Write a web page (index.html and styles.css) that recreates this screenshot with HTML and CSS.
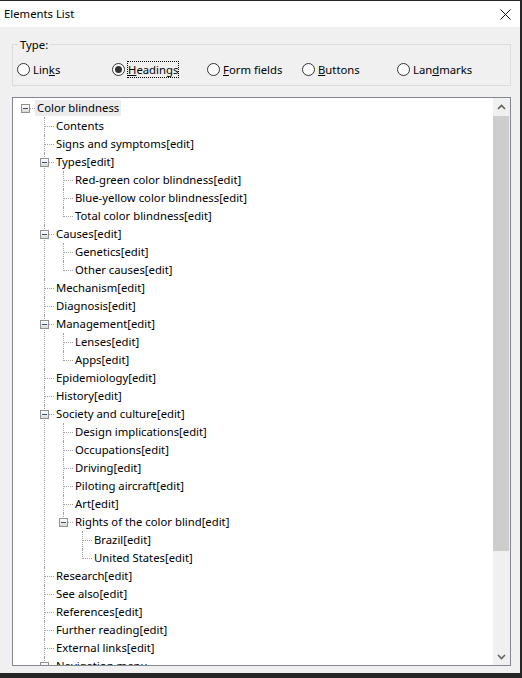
FILE: index.html
```html
<!DOCTYPE html>
<html>
<head>
<meta charset="utf-8">
<title>Elements List</title>
<link rel="stylesheet" href="styles.css">
</head>
<body>
<div class="window">
  <div class="titlebar">
    <span class="title">Elements List</span>
    <span class="close"><svg width="11" height="11" viewBox="0 0 11 11"><path d="M0.5 0.5 L10.5 10.5 M10.5 0.5 L0.5 10.5" stroke="#111" stroke-width="1" fill="none"/></svg></span>
  </div>
  <div class="group">
    <div class="group-label">Type:</div>
    <div class="radios">
      <div class="radio"><span class="circle"></span><span class="rlabel">Lin<u>k</u>s</span></div>
      <div class="radio"><span class="circle checked"></span><span class="rlabel focus"><u>H</u>eadings</span></div>
      <div class="radio"><span class="circle"></span><span class="rlabel"><u>F</u>orm fields</span></div>
      <div class="radio"><span class="circle"></span><span class="rlabel"><u>B</u>uttons</span></div>
      <div class="radio"><span class="circle"></span><span class="rlabel">Lan<u>d</u>marks</span></div>
    </div>
  </div>
  <div class="listbox">
    <div class="treearea">
      <ul class="tree">
        <li>
          <div class="row"><span class="twisty"><span class="exp"></span></span><span class="label sel">Color blindness</span></div>
          <ul>
            <li><div class="row"><span class="twisty"></span><span class="label">Contents</span></div></li>
            <li><div class="row"><span class="twisty"></span><span class="label">Signs and symptoms[edit]</span></div></li>
            <li>
              <div class="row"><span class="twisty"><span class="exp"></span></span><span class="label">Types[edit]</span></div>
              <ul>
                <li><div class="row"><span class="twisty"></span><span class="label">Red-green color blindness[edit]</span></div></li>
                <li><div class="row"><span class="twisty"></span><span class="label">Blue-yellow color blindness[edit]</span></div></li>
                <li><div class="row"><span class="twisty"></span><span class="label">Total color blindness[edit]</span></div></li>
              </ul>
            </li>
            <li>
              <div class="row"><span class="twisty"><span class="exp"></span></span><span class="label">Causes[edit]</span></div>
              <ul>
                <li><div class="row"><span class="twisty"></span><span class="label">Genetics[edit]</span></div></li>
                <li><div class="row"><span class="twisty"></span><span class="label">Other causes[edit]</span></div></li>
              </ul>
            </li>
            <li><div class="row"><span class="twisty"></span><span class="label">Mechanism[edit]</span></div></li>
            <li><div class="row"><span class="twisty"></span><span class="label">Diagnosis[edit]</span></div></li>
            <li>
              <div class="row"><span class="twisty"><span class="exp"></span></span><span class="label">Management[edit]</span></div>
              <ul>
                <li><div class="row"><span class="twisty"></span><span class="label">Lenses[edit]</span></div></li>
                <li><div class="row"><span class="twisty"></span><span class="label">Apps[edit]</span></div></li>
              </ul>
            </li>
            <li><div class="row"><span class="twisty"></span><span class="label">Epidemiology[edit]</span></div></li>
            <li><div class="row"><span class="twisty"></span><span class="label">History[edit]</span></div></li>
            <li>
              <div class="row"><span class="twisty"><span class="exp"></span></span><span class="label">Society and culture[edit]</span></div>
              <ul>
                <li><div class="row"><span class="twisty"></span><span class="label">Design implications[edit]</span></div></li>
                <li><div class="row"><span class="twisty"></span><span class="label">Occupations[edit]</span></div></li>
                <li><div class="row"><span class="twisty"></span><span class="label">Driving[edit]</span></div></li>
                <li><div class="row"><span class="twisty"></span><span class="label">Piloting aircraft[edit]</span></div></li>
                <li><div class="row"><span class="twisty"></span><span class="label">Art[edit]</span></div></li>
                <li>
                  <div class="row"><span class="twisty"><span class="exp"></span></span><span class="label">Rights of the color blind[edit]</span></div>
                  <ul>
                    <li><div class="row"><span class="twisty"></span><span class="label">Brazil[edit]</span></div></li>
                    <li><div class="row"><span class="twisty"></span><span class="label">United States[edit]</span></div></li>
                  </ul>
                </li>
              </ul>
            </li>
            <li><div class="row"><span class="twisty"></span><span class="label">Research[edit]</span></div></li>
            <li><div class="row"><span class="twisty"></span><span class="label">See also[edit]</span></div></li>
            <li><div class="row"><span class="twisty"></span><span class="label">References[edit]</span></div></li>
            <li><div class="row"><span class="twisty"></span><span class="label">Further reading[edit]</span></div></li>
            <li><div class="row"><span class="twisty"></span><span class="label">External links[edit]</span></div></li>
            <li class="more"><div class="row"><span class="twisty"><span class="exp"></span></span><span class="label">Navigation menu</span></div></li>
          </ul>
        </li>
      </ul>
    </div>
    <div class="scrollbar">
      <div class="sb-btn"><svg width="9" height="6" viewBox="0 0 9 6"><path d="M1 5 L4.5 1.5 L8 5" stroke="#606060" stroke-width="1.6" fill="none"/></svg></div>
      <div class="sb-track"><div class="sb-thumb"></div></div>
      <div class="sb-btn"><svg width="9" height="6" viewBox="0 0 9 6"><path d="M1 1 L4.5 4.5 L8 1" stroke="#606060" stroke-width="1.6" fill="none"/></svg></div>
    </div>
  </div>
</div>
</body>
</html>
```

FILE: styles.css
```css
html, body {
  margin: 0;
  padding: 0;
}
body {
  background: #262626;
  width: 522px;
  height: 678px;
  overflow: hidden;
  font-family: "Noto Sans", "Open Sans", sans-serif;
  font-size: 11.3px;
  color: #000;
}
.window {
  margin-top: 1px;
  width: 520px;
  height: 672px;
  background: #f0f0f0;
  box-sizing: border-box;
  overflow: hidden;
}
.titlebar {
  height: 26px;
  background: #fff;
  display: flex;
  align-items: center;
  justify-content: space-between;
  padding: 0 9px 0 4px;
}
.title {
  font-size: 11.3px;
  line-height: 16px;
}
.close {
  display: flex;
  width: 11px;
  height: 11px;
}
.group {
  margin: 17px 9px 0 12px;
  border: 1px solid #dcdcdc;
  height: 42px;
  box-sizing: border-box;
}
.group-label {
  margin: -8px 0 0 5px;
  padding: 0 2px;
  width: fit-content;
  line-height: 15px;
  background: #f0f0f0;
}
.radios {
  display: flex;
  margin-top: 8px;
  padding-left: 4px;
}
.radio {
  width: 95px;
  height: 18px;
  display: flex;
  align-items: center;
  flex: none;
}
.circle {
  width: 13px;
  height: 13px;
  box-sizing: border-box;
  border: 1px solid #333;
  border-radius: 50%;
  background: #fff;
  display: flex;
  align-items: center;
  justify-content: center;
  flex: none;
}
.circle.checked::after {
  content: "";
  width: 7px;
  height: 7px;
  border-radius: 50%;
  background: #333;
}
.rlabel {
  margin-left: 2px;
  border: 1px solid transparent;
  line-height: 15px;
  white-space: nowrap;
}
.rlabel.focus {
  border: 1px dotted #000;
}
.listbox {
  margin: 11px 9px 0 12px;
  height: 569px;
  border: 1px solid #828790;
  background: #fff;
  box-sizing: border-box;
  display: flex;
}
.treearea {
  flex: 1;
  overflow: hidden;
  padding-top: 1px;
}
.tree, .tree ul {
  list-style: none;
  margin: 0;
  padding: 0;
}
.tree ul {
  padding-left: 19px;
}
.tree li {
  position: relative;
}
.tree ul > li::before {
  content: "";
  position: absolute;
  left: 12px;
  top: 0;
  bottom: 0;
  border-left: 1px dotted #a0a0a0;
}
.tree ul > li:last-child::before {
  bottom: auto;
  height: 10px;
}
.tree ul > li.more::before {
  height: auto;
  bottom: 0;
}
.row {
  position: relative;
  height: 18px;
  display: flex;
  align-items: flex-start;
}
.row::before {
  content: "";
  position: absolute;
  left: 13px;
  top: 9px;
  width: 9px;
  border-top: 1px dotted #a0a0a0;
}
.twisty {
  width: 22px;
  flex: none;
  height: 18px;
  box-sizing: border-box;
  padding: 5px 0 0 8px;
}
.exp {
  position: relative;
  z-index: 1;
  display: flex;
  align-items: center;
  justify-content: center;
  width: 9px;
  height: 9px;
  box-sizing: border-box;
  border: 1px solid #919191;
  background: linear-gradient(#ffffff, #d8d8d8);
}
.exp::after {
  content: "";
  width: 5px;
  height: 1px;
  background: #3c4f6e;
}
.label {
  margin-top: 1px;
  height: 16px;
  line-height: 16px;
  padding: 0 2px;
  white-space: nowrap;
}
.label.sel {
  background: #ececec;
}
.scrollbar {
  width: 17px;
  flex: none;
  background: #f0f0f0;
  display: flex;
  flex-direction: column;
}
.sb-btn {
  height: 17px;
  flex: none;
  display: flex;
  align-items: center;
  justify-content: center;
}
.sb-track {
  flex: 1;
  padding-top: 1px;
}
.sb-thumb {
  height: 435px;
  margin: 0 1px 0 0;
  background: #cdcdcd;
}
```
